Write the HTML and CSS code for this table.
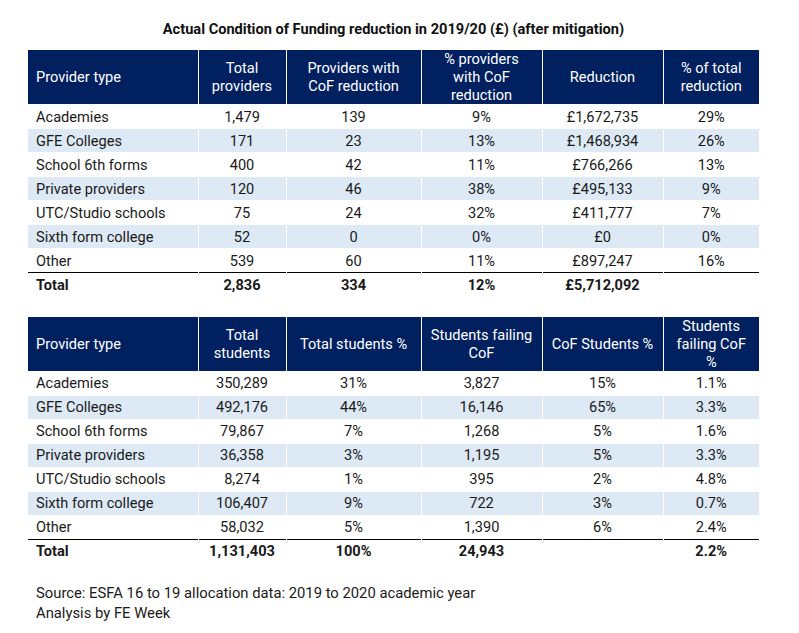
FILE: index.html
```html
<!DOCTYPE html>
<html>
<head>
<meta charset="utf-8">
<link rel="stylesheet" href="styles.css">
</head>
<body>
<div class="page">
  <h1 class="title">Actual Condition of Funding reduction in 2019/20 (£) (after mitigation)</h1>
  <table class="data">
    <colgroup>
      <col class="c1"><col class="c2"><col class="c3"><col class="c4"><col class="c5"><col class="c6">
    </colgroup>
    <thead>
      <tr><th>Provider type</th><th>Total<br>providers</th><th>Providers with<br>CoF reduction</th><th>% providers<br>with CoF<br>reduction</th><th>Reduction</th><th>% of total<br>reduction</th></tr>
    </thead>
    <tbody>
      <tr><td>Academies</td><td>1,479</td><td>139</td><td>9%</td><td>£1,672,735</td><td>29%</td></tr>
      <tr class="alt"><td>GFE Colleges</td><td>171</td><td>23</td><td>13%</td><td>£1,468,934</td><td>26%</td></tr>
      <tr><td>School 6th forms</td><td>400</td><td>42</td><td>11%</td><td>£766,266</td><td>13%</td></tr>
      <tr class="alt"><td>Private providers</td><td>120</td><td>46</td><td>38%</td><td>£495,133</td><td>9%</td></tr>
      <tr><td>UTC/Studio schools</td><td>75</td><td>24</td><td>32%</td><td>£411,777</td><td>7%</td></tr>
      <tr class="alt"><td>Sixth form college</td><td>52</td><td>0</td><td>0%</td><td>£0</td><td>0%</td></tr>
      <tr><td>Other</td><td>539</td><td>60</td><td>11%</td><td>£897,247</td><td>16%</td></tr>
      <tr class="total"><td>Total</td><td>2,836</td><td>334</td><td>12%</td><td>£5,712,092</td><td></td></tr>
    </tbody>
  </table>

  <table class="data second">
    <colgroup>
      <col class="c1"><col class="c2"><col class="c3"><col class="c4"><col class="c5"><col class="c6">
    </colgroup>
    <thead>
      <tr><th>Provider type</th><th>Total<br>students</th><th>Total students %</th><th>Students failing<br>CoF</th><th>CoF Students %</th><th>Students<br>failing CoF<br>%</th></tr>
    </thead>
    <tbody>
      <tr><td>Academies</td><td>350,289</td><td>31%</td><td>3,827</td><td>15%</td><td>1.1%</td></tr>
      <tr class="alt"><td>GFE Colleges</td><td>492,176</td><td>44%</td><td>16,146</td><td>65%</td><td>3.3%</td></tr>
      <tr><td>School 6th forms</td><td>79,867</td><td>7%</td><td>1,268</td><td>5%</td><td>1.6%</td></tr>
      <tr class="alt"><td>Private providers</td><td>36,358</td><td>3%</td><td>1,195</td><td>5%</td><td>3.3%</td></tr>
      <tr><td>UTC/Studio schools</td><td>8,274</td><td>1%</td><td>395</td><td>2%</td><td>4.8%</td></tr>
      <tr class="alt"><td>Sixth form college</td><td>106,407</td><td>9%</td><td>722</td><td>3%</td><td>0.7%</td></tr>
      <tr><td>Other</td><td>58,032</td><td>5%</td><td>1,390</td><td>6%</td><td>2.4%</td></tr>
      <tr class="total"><td>Total</td><td>1,131,403</td><td>100%</td><td>24,943</td><td></td><td>2.2%</td></tr>
    </tbody>
  </table>

  <p class="source">Source: ESFA 16 to 19 allocation data: 2019 to 2020 academic year<br>Analysis by FE Week</p>
</div>
</body>
</html>
```

FILE: styles.css
```css
* { box-sizing: border-box; }
html, body { margin: 0; padding: 0; background: #fff; }
body {
  font-family: Roboto, "Liberation Sans", sans-serif;
  color: #1a1a1a;
}
.page {
  width: 799px;
  padding: 20px 0 0 28px;
}
.title {
  width: 731px;
  margin: 0 0 12px;
  font-size: 14.6px;
  line-height: 18px;
  font-weight: bold;
  text-align: center;
  color: #111;
}
.data {
  width: 731px;
  border-collapse: collapse;
  table-layout: fixed;
  font-size: 14.6px;
}
.data.second { margin-top: 20px; }
.c1 { width: 170px; }
.c2 { width: 88px; }
.c3 { width: 135px; }
.c4 { width: 121px; }
.c5 { width: 121px; }
.c6 { width: 96px; }
.data th {
  background: #002060;
  color: #fff;
  font-weight: normal;
  height: 54px;
  line-height: 18px;
  padding: 0 2px;
  text-align: center;
  border-left: 1px solid #fff;
}
.data th:first-child { text-align: left; padding-left: 8px; border-left: 0; }
.data td {
  height: 24px;
  padding: 0 2px;
  text-align: center;
  line-height: 18px;
  border-left: 1px solid #fff;
  border-top: 1px solid #fff;
}
.data td:first-child { text-align: left; padding-left: 8px; border-left: 0; }
.data tr.alt td { background: #dde9f5; }
.data tr.total td {
  font-weight: bold;
  border-top: 1px solid #000;
}
.source {
  margin: 20px 0 0;
  padding-left: 8px;
  font-size: 14.8px;
  line-height: 20px;
}
```
